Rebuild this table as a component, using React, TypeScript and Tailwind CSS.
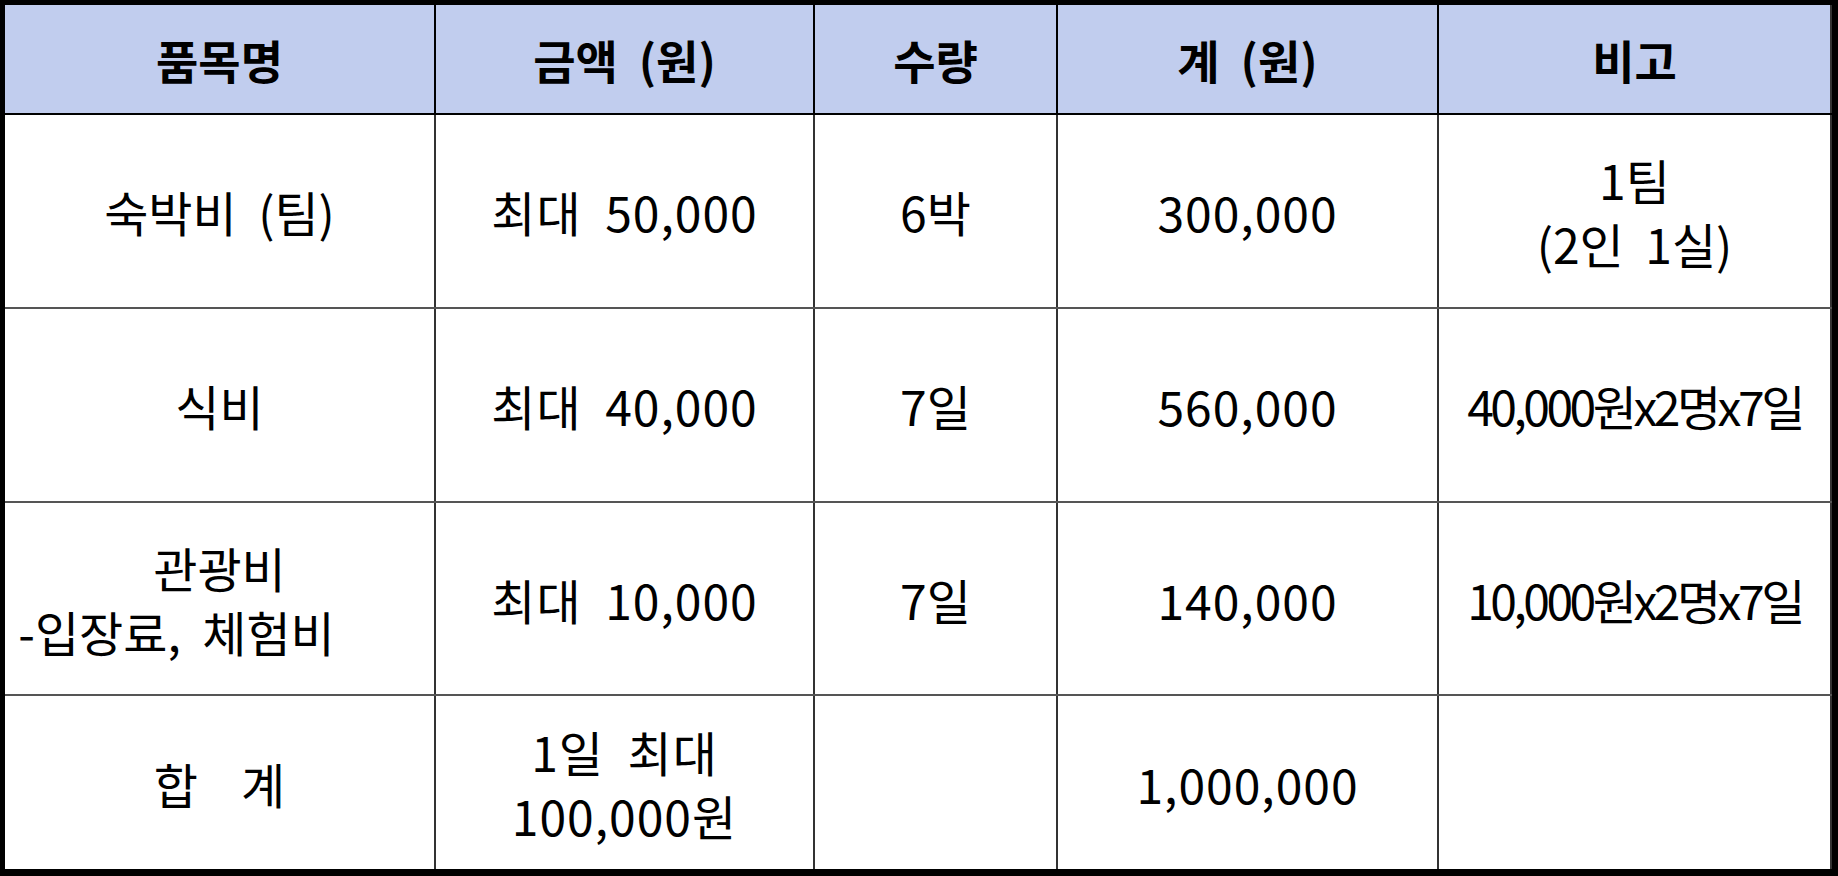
const cols = "grid grid-cols-[431px_379px_243px_381px_393px]";
const cell = "flex flex-col items-center justify-center border-r-2 border-[#333] text-center whitespace-pre";

type Row = { h: string; cells: string[][] };

const rows: Row[] = [
  { h: "h-[194px]", cells: [["숙박비  (팀)"], ["최대  50,000"], ["6박"], ["300,000"], ["1팀", "(2인  1실)"]] },
  { h: "h-[194px]", cells: [["식비"], ["최대  40,000"], ["7일"], ["560,000"], ["40,000원x2명x7일"]] },
  { h: "h-[193px]", cells: [["관광비", "-입장료,  체험비"], ["최대  10,000"], ["7일"], ["140,000"], ["10,000원x2명x7일"]] },
  { h: "h-[173px]", cells: [["합    계"], ["1일  최대", "100,000원"], [""], ["1,000,000"], [""]] },
];

function lineClass(ri: number, ci: number, li: number, n: number) {
  if (ci === 4 && n === 1) return "tracking-[-3.5px]";
  if (ri === 2 && ci === 0 && li === 1) return "pr-[86px]";
  if (ci === 1 || ci === 3) return "tracking-[1px]";
  return "";
}

export default function App() {
  return (
    <div
      className="w-[1838px] h-[876px] bg-white border-l-[5px] border-t-[5px] border-r-[6px] border-b-[7px] border-black text-black text-[48px] leading-[64px]"
      style={{ fontFamily: '"Noto Sans CJK KR", "Noto Sans", sans-serif' }}
    >
      <div className={`${cols} h-[110px] bg-[#c1cdee] border-b-2 border-black font-bold text-[46px]`}>
        {["품목명", "금액  (원)", "수량", "계  (원)", "비고"].map((t, i) => (
          <div key={i} className={`${cell} ${i === 4 ? "border-r-0" : "border-black"}`}>
            {t}
          </div>
        ))}
      </div>
      {rows.map((r, ri) => (
        <div key={ri} className={`${cols} ${r.h} ${ri < rows.length - 1 ? "border-b-2 border-[#555]" : ""}`}>
          {r.cells.map((lines, ci) => (
            <div key={ci} className={`${cell} ${ci === 4 ? "border-r-0" : ""}`}>
              {lines.map((l, li) => (
                <div key={li} className={lineClass(ri, ci, li, lines.length)}>
                  {l}
                </div>
              ))}
            </div>
          ))}
        </div>
      ))}
    </div>
  );
}
